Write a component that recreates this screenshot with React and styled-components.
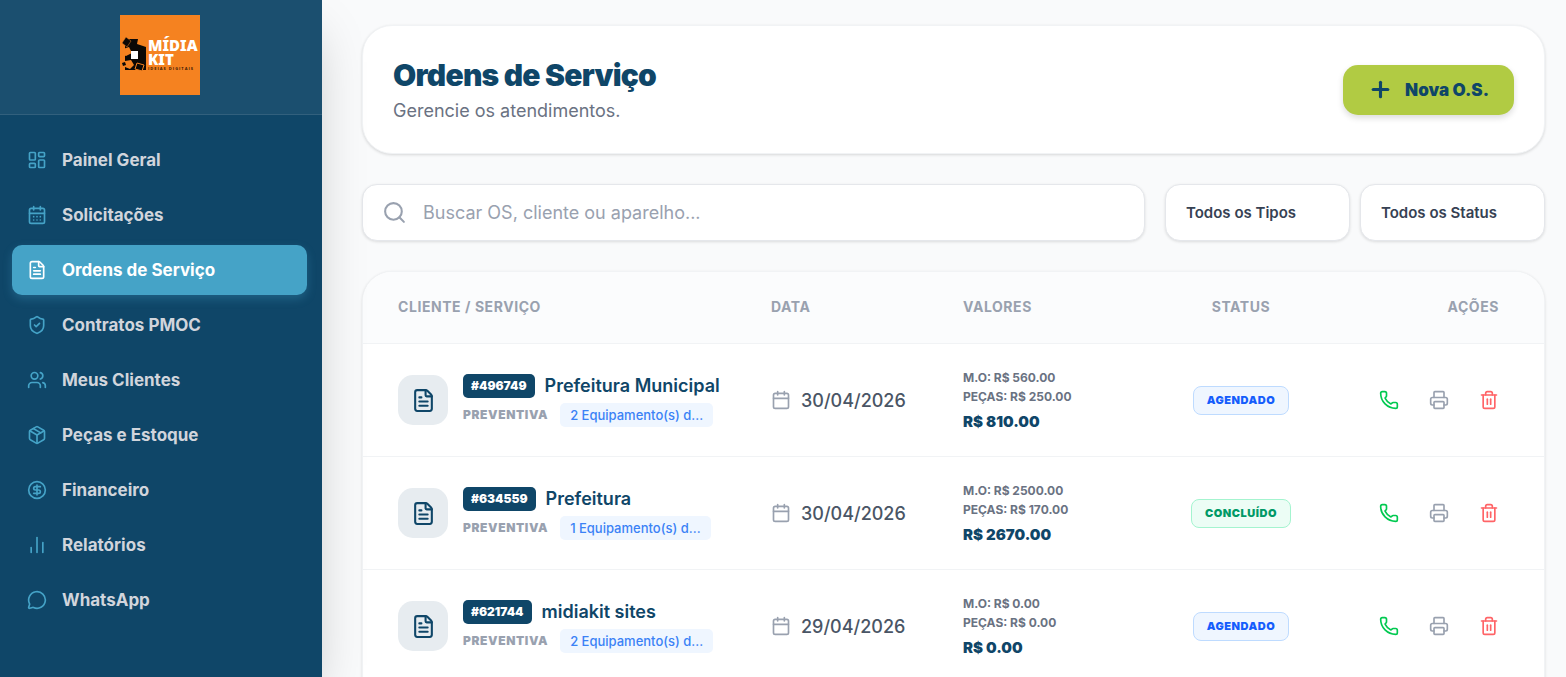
import React from 'react';
import styled, { createGlobalStyle, css } from 'styled-components';
import {
  LayoutDashboard,
  CalendarDays,
  FileText,
  ShieldCheck,
  Users,
  Package,
  CircleDollarSign,
  ChartNoAxesColumn,
  MessageCircle,
  Search,
  Plus,
  Calendar,
  Phone,
  Printer,
  Trash2,
} from 'lucide-react';

const colors = {
  navy: '#0f4668',
  sky: '#45a3c7',
  lime: '#b1cb43',
  page: '#f9fafb',
  line: '#f1f3f5',
  gray400: '#99a1af',
  gray500: '#6a7282',
  gray600: '#4a5565',
  gray700: '#364153',
};

const GlobalStyle = createGlobalStyle`
  *, *::before, *::after {
    box-sizing: border-box;
  }
  body {
    margin: 0;
    background: ${colors.page};
    font-family: Inter, "Liberation Sans", sans-serif;
  }
  button, input, select {
    font-family: inherit;
  }
`;

const Layout = styled.div`
  display: flex;
  height: 100vh;
  overflow: hidden;
`;

/* ---------- sidebar ---------- */

const Sidebar = styled.aside`
  flex: 0 0 322px;
  display: flex;
  flex-direction: column;
  background: ${colors.navy};
  box-shadow: 0 25px 50px -12px rgba(0, 0, 0, 0.25);
  z-index: 1;
`;

const Brand = styled.div`
  display: flex;
  justify-content: center;
  padding: 15px 17px 19px 15px;
  background: rgba(255, 255, 255, 0.05);
  border-bottom: 1px solid rgba(255, 255, 255, 0.1);
`;

const Nav = styled.nav`
  display: flex;
  flex-direction: column;
  gap: 5px;
  padding: 20px 15px 20px 12px;
`;

const NavLink = styled.a`
  display: flex;
  align-items: center;
  gap: 15px;
  height: 50px;
  padding: 0 15px;
  border-radius: 10px;
  color: #d1d5dc;
  font-size: 17px;
  font-weight: 700;
  text-decoration: none;

  svg {
    color: ${colors.sky};
  }

  ${({ $active }) =>
    $active &&
    css`
      background: ${colors.sky};
      color: #fff;
      box-shadow: 0 4px 10px rgba(69, 163, 199, 0.3);

      svg {
        color: #fff;
      }
    `}
`;

/* ---------- main ---------- */

const Main = styled.main`
  flex: 1;
  min-width: 0;
  display: flex;
  flex-direction: column;
  gap: 30px;
  padding: 25px 21px 25px 40px;
  overflow: hidden;
`;

const PageHeader = styled.header`
  display: flex;
  align-items: center;
  justify-content: space-between;
  padding: 30px;
  background: #fff;
  border: 1px solid ${colors.line};
  border-radius: 30px;
  box-shadow: 0 1px 3px rgba(0, 0, 0, 0.14);
`;

const Title = styled.h1`
  margin: 0;
  color: ${colors.navy};
  font-size: 30px;
  line-height: 38px;
  font-weight: 900;
  letter-spacing: -0.025em;
`;

const Subtitle = styled.p`
  margin: 4px 0 0;
  color: ${colors.gray500};
  font-size: 18px;
  line-height: 25px;
  font-weight: 400;
`;

const NewButton = styled.button`
  display: flex;
  align-items: center;
  gap: 12px;
  height: 50px;
  padding: 0 25px;
  border: 0;
  border-radius: 15px;
  background: ${colors.lime};
  color: ${colors.navy};
  font-size: 17px;
  font-weight: 900;
  box-shadow: 0 3px 6px rgba(0, 0, 0, 0.14);
  cursor: pointer;
`;

const Filters = styled.div`
  display: flex;
  gap: 20px;
`;

const fieldBox = css`
  height: 57px;
  background: #fff;
  border: 1px solid #e5e7eb;
  border-radius: 15px;
  box-shadow: 0 1px 3px rgba(0, 0, 0, 0.12);
`;

const SearchBox = styled.label`
  ${fieldBox}
  flex: 1;
  display: flex;
  align-items: center;
  gap: 16px;
  padding: 0 19px;
  color: ${colors.gray400};
`;

const SearchInput = styled.input`
  flex: 1;
  min-width: 0;
  padding: 0;
  border: 0;
  outline: 0;
  background: transparent;
  color: ${colors.gray700};
  font-size: 18px;

  &::placeholder {
    color: ${colors.gray400};
  }
`;

const Selects = styled.div`
  display: flex;
  gap: 10px;
`;

const Select = styled.select`
  ${fieldBox}
  width: 185px;
  padding: 0 20px;
  appearance: none;
  color: ${colors.gray700};
  font-size: 15px;
  font-weight: 600;
`;

/* ---------- table ---------- */

const TableCard = styled.section`
  flex-shrink: 0;
  padding-bottom: 30px;
  background: #fff;
  border: 1px solid ${colors.line};
  border-radius: 30px;
  box-shadow: 0 1px 3px rgba(0, 0, 0, 0.12);
  overflow: hidden;
`;

const Table = styled.table`
  width: 100%;
  table-layout: fixed;
  border-collapse: separate;
  border-spacing: 0;
`;

const Th = styled.th`
  width: ${({ $width }) => ($width ? `${$width}px` : 'auto')};
  height: 72px;
  padding: 0 35px 2px;
  background: #fbfcfd;
  border-bottom: 1px solid ${colors.line};
  color: ${colors.gray400};
  font-size: 14px;
  font-weight: 700;
  letter-spacing: 0.04em;
  text-align: ${({ $align }) => $align || 'left'};
  text-transform: uppercase;

  &:last-child {
    padding-right: 45px;
  }
`;

const Td = styled.td`
  height: 113px;
  padding: 0 35px;
  border-bottom: 1px solid ${colors.line};
  text-align: ${({ $align }) => $align || 'left'};
  vertical-align: middle;
`;

const Client = styled.div`
  display: flex;
  align-items: center;
  gap: 15px;
`;

const FileTile = styled.div`
  flex: 0 0 50px;
  height: 50px;
  display: flex;
  align-items: center;
  justify-content: center;
  border-radius: 15px;
  background: #e7ecf0;
  color: ${colors.navy};
`;

const ClientInfo = styled.div`
  display: flex;
  flex-direction: column;
  gap: 5px;
`;

const ClientLine = styled.div`
  display: flex;
  align-items: center;
  gap: ${({ $gap }) => $gap || 10}px;
  height: 24px;
  white-space: nowrap;
`;

const OrderId = styled.span`
  padding: 0 8px;
  border-radius: 5px;
  background: ${colors.navy};
  color: #fff;
  font-size: 12px;
  line-height: 24px;
  font-weight: 900;
`;

const ClientName = styled.span`
  color: ${colors.navy};
  font-size: 18px;
  font-weight: 600;
`;

const Kind = styled.span`
  color: ${colors.gray400};
  font-size: 12px;
  font-weight: 900;
  letter-spacing: 0.05em;
  text-transform: uppercase;
`;

const Equipment = styled.span`
  min-width: 150px;
  padding: 0 10px;
  border-radius: 5px;
  background: #eff6ff;
  color: #3b82f6;
  font-size: 13px;
  line-height: 24px;
  font-weight: 500;
`;

const DateCell = styled.div`
  display: flex;
  align-items: center;
  gap: 10px;
  color: ${colors.gray600};
  font-size: 18px;
  font-weight: 500;

  svg {
    flex-shrink: 0;
    color: ${colors.gray400};
  }
`;

const Values = styled.div`
  color: ${colors.gray500};
  font-size: 12px;
  line-height: 19px;
  font-weight: 700;
  white-space: nowrap;
`;

const Total = styled.div`
  margin-top: 5px;
  color: ${colors.navy};
  font-size: 15px;
  line-height: 22px;
  font-weight: 900;
`;

const statusTones = {
  agendado: { color: '#155dfc', background: '#eff6ff', border: '#bedbff' },
  concluido: { color: '#009966', background: '#ecfdf5', border: '#a4f4cf' },
};

const Badge = styled.span`
  display: inline-block;
  padding: 0 13px;
  border: 1px solid ${({ $tone }) => statusTones[$tone].border};
  border-radius: 8px;
  background: ${({ $tone }) => statusTones[$tone].background};
  color: ${({ $tone }) => statusTones[$tone].color};
  font-size: 11px;
  line-height: 27px;
  font-weight: 900;
  letter-spacing: 0.05em;
  text-transform: uppercase;
`;

const Actions = styled.div`
  display: flex;
  justify-content: flex-end;
  gap: 10px;
`;

const IconButton = styled.button`
  display: flex;
  padding: 10px;
  border: 0;
  background: none;
  color: ${({ $color }) => $color};
  cursor: pointer;
`;

const menu = [
  { label: 'Painel Geral', icon: LayoutDashboard },
  { label: 'Solicitações', icon: CalendarDays },
  { label: 'Ordens de Serviço', icon: FileText, active: true },
  { label: 'Contratos PMOC', icon: ShieldCheck },
  { label: 'Meus Clientes', icon: Users },
  { label: 'Peças e Estoque', icon: Package },
  { label: 'Financeiro', icon: CircleDollarSign },
  { label: 'Relatórios', icon: ChartNoAxesColumn },
  { label: 'WhatsApp', icon: MessageCircle },
];

const orders = [
  {
    id: '496749',
    client: 'Prefeitura Municipal',
    kind: 'Preventiva',
    equipment: '2 Equipamento(s) d...',
    date: '30/04/2026',
    labor: '560.00',
    parts: '250.00',
    total: '810.00',
    status: 'Agendado',
    tone: 'agendado',
  },
  {
    id: '634559',
    client: 'Prefeitura',
    kind: 'Preventiva',
    equipment: '1 Equipamento(s) d...',
    date: '30/04/2026',
    labor: '2500.00',
    parts: '170.00',
    total: '2670.00',
    status: 'Concluído',
    tone: 'concluido',
  },
  {
    id: '621744',
    client: 'midiakit sites',
    kind: 'Preventiva',
    equipment: '2 Equipamento(s) d...',
    date: '29/04/2026',
    labor: '0.00',
    parts: '0.00',
    total: '0.00',
    status: 'Agendado',
    tone: 'agendado',
  },
];

function Logo() {
  return (
    <svg width="80" height="80" viewBox="0 0 80 80" role="img" aria-label="Mídia Kit">
      <rect width="80" height="80" fill="#f58220" />
      <rect x="5" y="24" width="21" height="31" fill="#0b0806" />
      <path d="M6 22l5 4-4 6-5-4z" fill="#0b0806" stroke="#f58220" strokeWidth="0.5" />
      <path d="M18 24h8v8l-9-3z" fill="#f58220" />
      <path d="M3 34l6-2 3 6-6 3-3-1z" fill="#f58220" />
      <path d="M5 46l6-1 3 5-4 4-5-2z" fill="#f58220" />
      <path d="M2 48l3-1 1 3-3 1z" fill="#0b0806" />
      <path d="M17 48l7 2-2 6-7-2z" fill="#0b0806" stroke="#f58220" />
      <rect x="11" y="36" width="7" height="8" fill="#fff" />
      <g fill="#fff" fontFamily='"Noto Sans", "Open Sans", sans-serif' fontWeight="900">
        <text x="28" y="36" fontSize="15">MÍDIA</text>
        <text x="28" y="50" fontSize="15">KIT</text>
      </g>
      <text
        x="28"
        y="55"
        fontSize="4"
        fontWeight="700"
        letterSpacing="1"
        fill="#3a1a06"
        fontFamily='"Open Sans", sans-serif'
      >
        IDEIAS DIGITAIS
      </text>
    </svg>
  );
}

export default function App() {
  return (
    <Layout>
      <GlobalStyle />
      <Sidebar>
        <Brand>
          <Logo />
        </Brand>
        <Nav>
          {menu.map(({ label, icon: Icon, active }) => (
            <NavLink key={label} href="#" $active={active}>
              <Icon size={20} />
              {label}
            </NavLink>
          ))}
        </Nav>
      </Sidebar>

      <Main>
        <PageHeader>
          <div>
            <Title>Ordens de Serviço</Title>
            <Subtitle>Gerencie os atendimentos.</Subtitle>
          </div>
          <NewButton type="button">
            <Plus size={25} strokeWidth={3} />
            Nova O.S.
          </NewButton>
        </PageHeader>

        <Filters>
          <SearchBox>
            <Search size={25} />
            <SearchInput type="text" aria-label="Buscar" placeholder="Buscar OS, cliente ou aparelho..." />
          </SearchBox>
          <Selects>
            <Select aria-label="Tipo">
              <option>Todos os Tipos</option>
            </Select>
            <Select aria-label="Status">
              <option>Todos os Status</option>
            </Select>
          </Selects>
        </Filters>

        <TableCard>
          <Table>
            <thead>
              <tr>
                <Th>Cliente / Serviço</Th>
                <Th $width={192}>Data</Th>
                <Th $width={214}>Valores</Th>
                <Th $width={198} $align="center">Status</Th>
                <Th $width={204} $align="right">Ações</Th>
              </tr>
            </thead>
            <tbody>
              {orders.map((order) => (
                <tr key={order.id}>
                  <Td>
                    <Client>
                      <FileTile>
                        <FileText size={25} />
                      </FileTile>
                      <ClientInfo>
                        <ClientLine>
                          <OrderId>#{order.id}</OrderId>
                          <ClientName>{order.client}</ClientName>
                        </ClientLine>
                        <ClientLine $gap={12}>
                          <Kind>{order.kind}</Kind>
                          <Equipment>{order.equipment}</Equipment>
                        </ClientLine>
                      </ClientInfo>
                    </Client>
                  </Td>
                  <Td>
                    <DateCell>
                      <Calendar size={20} />
                      {order.date}
                    </DateCell>
                  </Td>
                  <Td>
                    <Values>
                      <div>M.O: R$ {order.labor}</div>
                      <div>PEÇAS: R$ {order.parts}</div>
                      <Total>R$ {order.total}</Total>
                    </Values>
                  </Td>
                  <Td $align="center">
                    <Badge $tone={order.tone}>{order.status}</Badge>
                  </Td>
                  <Td>
                    <Actions>
                      <IconButton type="button" aria-label="Ligar" $color="#00c950">
                        <Phone size={20} />
                      </IconButton>
                      <IconButton type="button" aria-label="Imprimir" $color={colors.gray400}>
                        <Printer size={20} />
                      </IconButton>
                      <IconButton type="button" aria-label="Excluir" $color="#ff6467">
                        <Trash2 size={20} />
                      </IconButton>
                    </Actions>
                  </Td>
                </tr>
              ))}
            </tbody>
          </Table>
        </TableCard>
      </Main>
    </Layout>
  );
}
